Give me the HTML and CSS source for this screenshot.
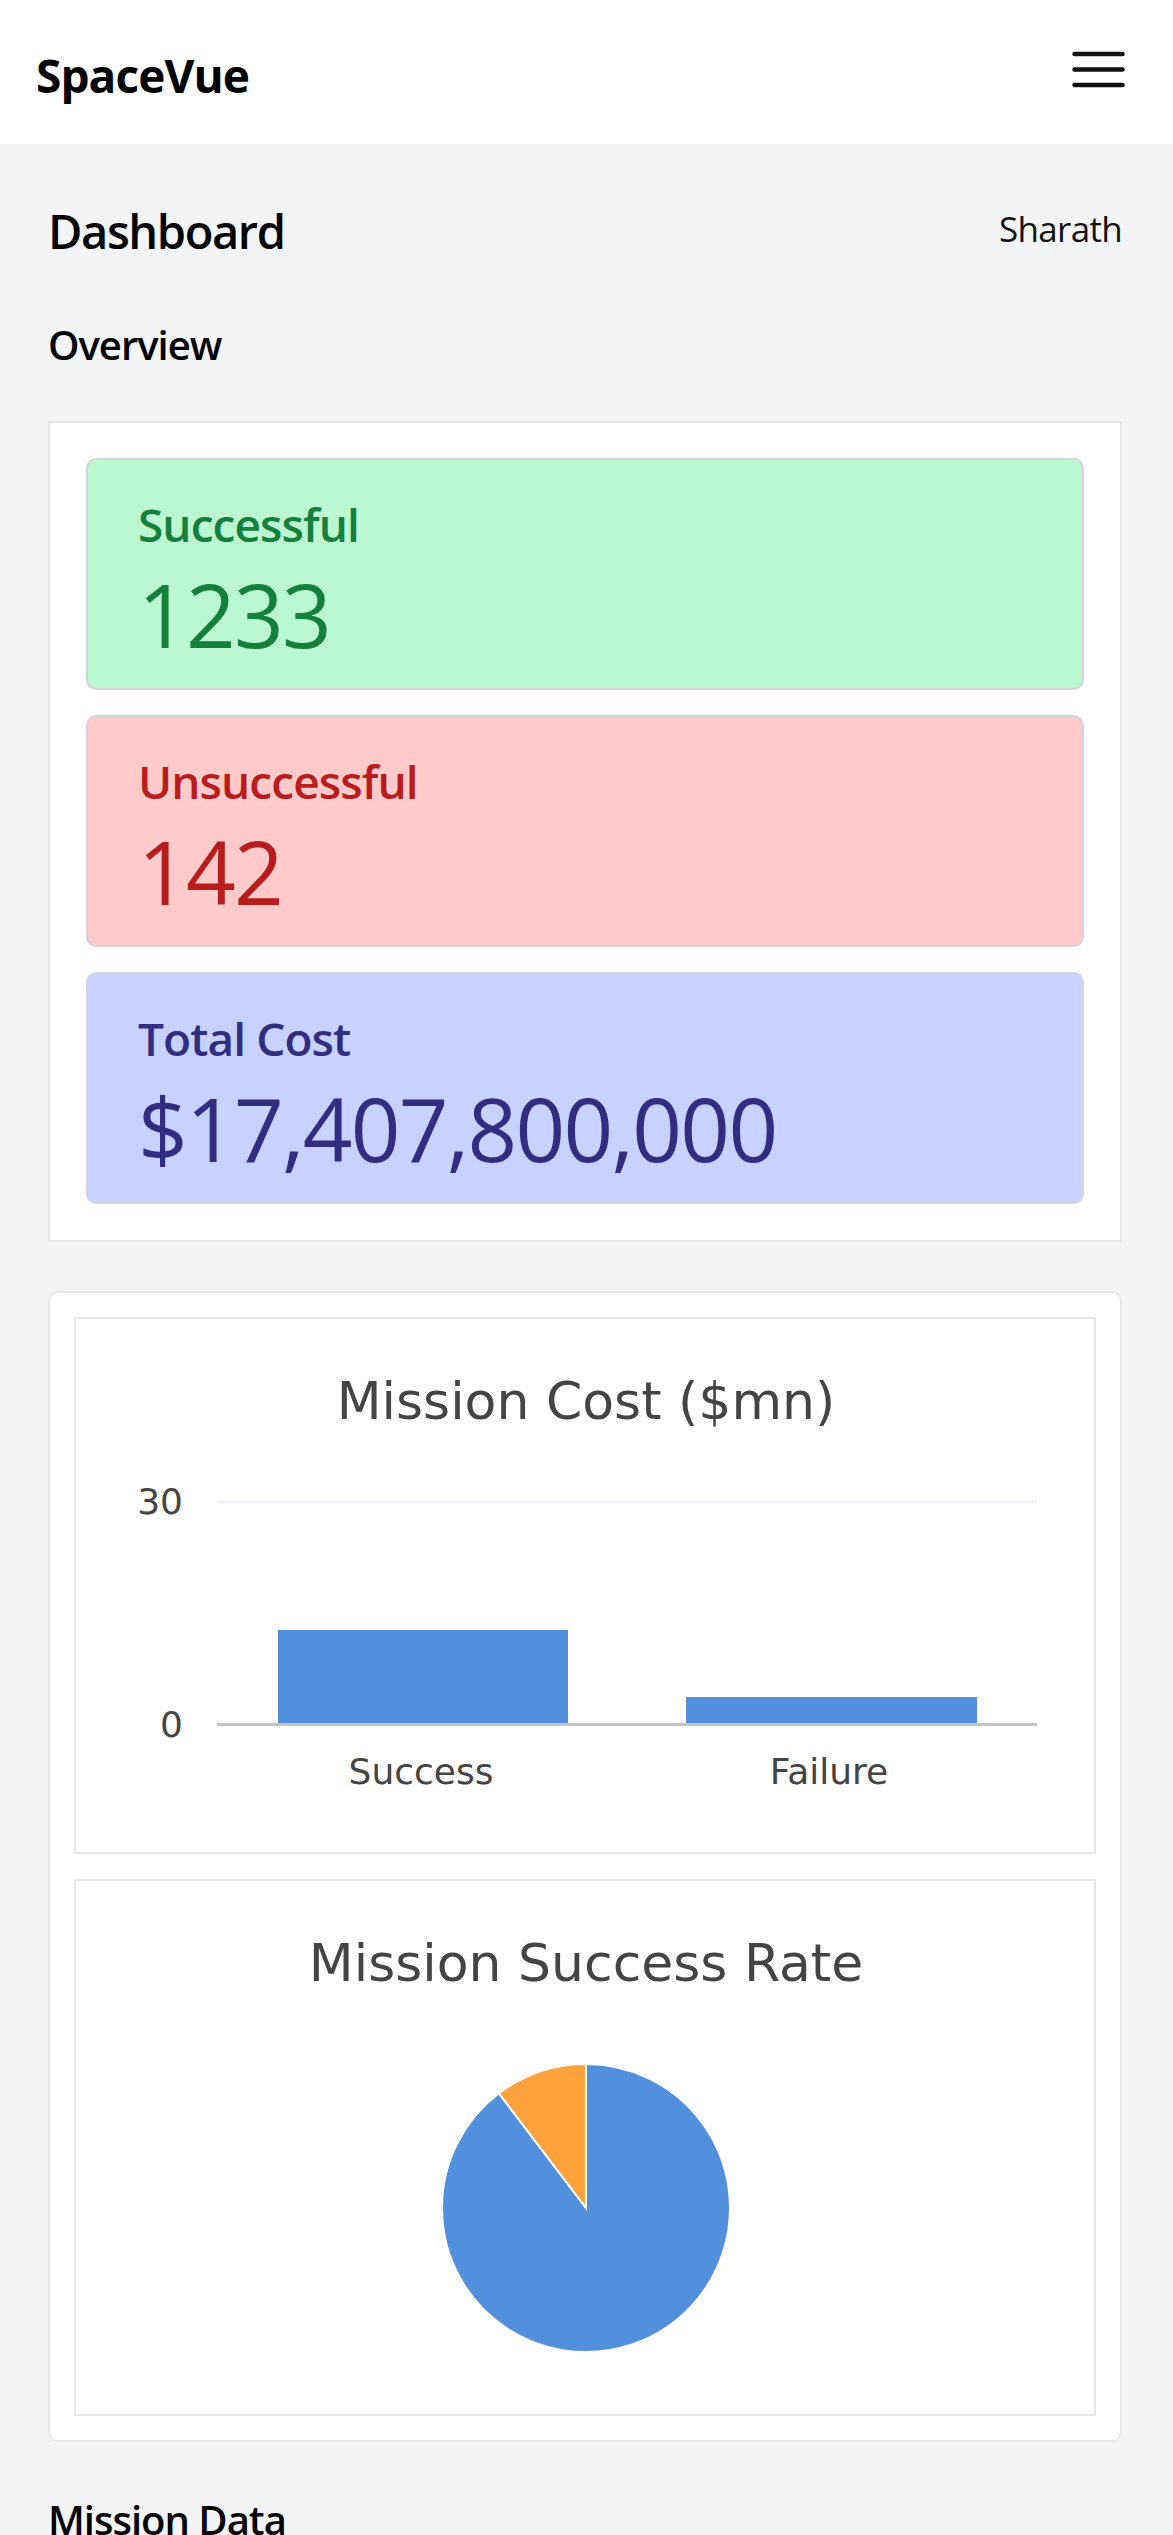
FILE: index.html
```html
<!DOCTYPE html>
<html lang="en">
<head>
<meta charset="utf-8">
<title>SpaceVue</title>
<link rel="stylesheet" href="styles.css">
</head>
<body>
<header class="nav">
  <div class="brand">SpaceVue</div>
  <button class="menu" aria-label="Menu">
    <svg width="53" height="40" viewBox="0 0 53 40">
      <g stroke="#111" stroke-width="4.5" stroke-linecap="round">
        <line x1="2.5" y1="4" x2="50.5" y2="4"/>
        <line x1="2.5" y1="19.5" x2="50.5" y2="19.5"/>
        <line x1="2.5" y1="35" x2="50.5" y2="35"/>
      </g>
    </svg>
  </button>
</header>

<main class="main">
  <div class="title-row">
    <h1 class="page-title">Dashboard</h1>
    <span class="user">Sharath</span>
  </div>

  <h2 class="section-title">Overview</h2>

  <section class="overview-card">
    <div class="stat stat-green">
      <div class="stat-label">Successful</div>
      <div class="stat-value">1233</div>
    </div>
    <div class="stat stat-red">
      <div class="stat-label">Unsuccessful</div>
      <div class="stat-value">142</div>
    </div>
    <div class="stat stat-blue">
      <div class="stat-label">Total Cost</div>
      <div class="stat-value">$17,407,800,000</div>
    </div>
  </section>

  <section class="charts-card">
    <div class="chart-box">
      <svg class="chart" viewBox="0 0 1018 533" width="1018" height="533">
        <text x="510" y="100" text-anchor="middle" class="chart-title">Mission Cost ($mn)</text>
        <line x1="141" y1="183" x2="961" y2="183" stroke="#edf1f6" stroke-width="3"/>
        <text x="107" y="195" text-anchor="end" class="axis-label">30</text>
        <text x="107" y="418" text-anchor="end" class="axis-label">0</text>
        <rect x="202" y="311" width="290" height="94" fill="#5290dc"/>
        <rect x="610" y="378" width="291" height="27" fill="#5290dc"/>
        <line x1="141" y1="405.5" x2="961" y2="405.5" stroke="#c4c4c4" stroke-width="3"/>
        <text x="345" y="465" text-anchor="middle" class="axis-label">Success</text>
        <text x="753" y="465" text-anchor="middle" class="axis-label">Failure</text>
      </svg>
    </div>
    <div class="chart-box">
      <svg class="chart" viewBox="0 0 1018 533" width="1018" height="533">
        <text x="510" y="100" text-anchor="middle" class="chart-title">Mission Success Rate</text>
        <path d="M510,327 L510,183 A144,144 0 1 1 422.9,212.3 Z" fill="#5290dc" stroke="#fff" stroke-width="2"/>
        <path d="M510,327 L422.9,212.3 A144,144 0 0 1 510,183 Z" fill="#ffa23c" stroke="#fff" stroke-width="2"/>
      </svg>
    </div>
  </section>

  <h2 class="section-title section-bottom">Mission Data</h2>
</main>
</body>
</html>
```

FILE: styles.css
```css
* {
  box-sizing: border-box;
}

html, body {
  margin: 0;
  padding: 0;
}

body {
  background: #f3f4f6;
  font-family: "Open Sans", "Noto Sans", sans-serif;
  color: #111;
}

.nav {
  height: 144px;
  background: #ffffff;
  display: flex;
  align-items: center;
  justify-content: space-between;
  padding: 0 48px 0 36px;
}

.brand {
  font-size: 46px;
  font-weight: 700;
  letter-spacing: -0.02em;
  line-height: 64px;
  padding-top: 6px;
  color: #000;
}

.menu {
  border: 0;
  background: none;
  padding: 0;
  margin: 0;
  width: 53px;
  height: 40px;
  display: block;
  margin-top: -4px;
}

.menu svg {
  display: block;
}

.main {
  padding: 53px 51px 0 48px;
}

.title-row {
  display: flex;
  align-items: center;
  justify-content: space-between;
}

.page-title {
  margin: 0;
  font-size: 47px;
  font-weight: 600;
  letter-spacing: -0.03em;
  line-height: 68px;
  color: #000;
}

.user {
  font-size: 35px;
  font-weight: 400;
  letter-spacing: -0.02em;
  line-height: 64px;
  color: #111;
  padding-bottom: 4px;
}

.section-title {
  margin: 52px 0 48px 0;
  font-size: 40px;
  font-weight: 600;
  letter-spacing: -0.025em;
  line-height: 56px;
  color: #000;
}

.overview-card {
  background: #ffffff;
  border: 2px solid #e5e7eb;
  padding: 35px 36px 36px 36px;
  display: flex;
  flex-direction: column;
  gap: 25px;
}

.stat {
  border: 2px solid #d1d5db;
  border-radius: 10px;
  padding: 34px 52px 14px 50px;
  height: 232px;
}

.stat-label {
  font-size: 46px;
  font-weight: 600;
  letter-spacing: -0.02em;
  line-height: 60px;
}

.stat-value {
  font-size: 87px;
  font-weight: 400;
  letter-spacing: -0.02em;
  line-height: 120px;
}

.stat-green {
  background: #bbf7d0;
  color: #15803d;
}

.stat-red {
  background: #fecaca;
  color: #b91c1c;
}

.stat-blue {
  background: #c7d2fe;
  color: #312e81;
}

.charts-card {
  margin-top: 49px;
  background: #ffffff;
  border: 2px solid #e5e7eb;
  border-radius: 10px;
  padding: 24px;
  display: flex;
  flex-direction: column;
  gap: 25px;
}

.chart-box {
  border: 2px solid #e5e7eb;
  height: 537px;
  background: #ffffff;
}

.chart {
  display: block;
  width: 100%;
  height: 533px;
}

.chart-title {
  font-family: "DejaVu Sans", sans-serif;
  font-size: 52px;
  fill: #444444;
}

.axis-label {
  font-family: "DejaVu Sans", sans-serif;
  font-size: 36px;
  fill: #444444;
}

.section-bottom {
  margin-top: 50px;
  margin-bottom: 0;
}
```
